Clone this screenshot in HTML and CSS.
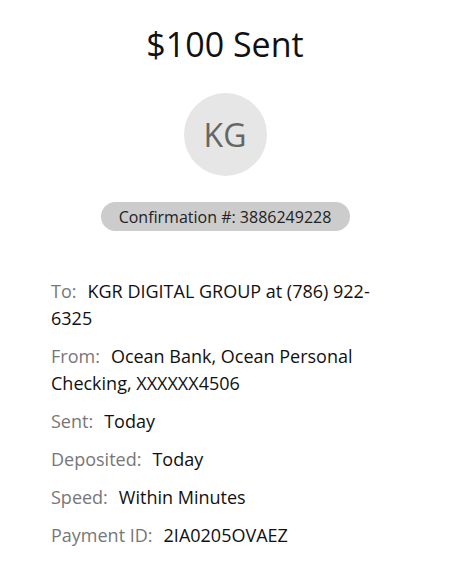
FILE: index.html
```html
<!DOCTYPE html>
<html>
<head>
<meta charset="utf-8">
<link rel="stylesheet" href="styles.css">
</head>
<body>
<main class="receipt">
  <h1 class="title">$100 Sent</h1>
  <div class="avatar">KG</div>
  <div class="confirm">Confirmation #: 3886249228</div>
  <div class="details">
    <p class="row"><span class="label">To:</span>KGR DIGITAL GROUP at (786) 922-6325</p>
    <p class="row"><span class="label">From:</span>Ocean Bank, Ocean Personal Checking, XXXXXX4506</p>
    <p class="row"><span class="label">Sent:</span>Today</p>
    <p class="row"><span class="label">Deposited:</span>Today</p>
    <p class="row"><span class="label">Speed:</span>Within Minutes</p>
    <p class="row"><span class="label">Payment ID:</span>2IA0205OVAEZ</p>
  </div>
</main>
</body>
</html>
```
FILE: styles.css
```css
* { box-sizing: border-box; }
html, body {
  margin: 0;
  padding: 0;
  background: #fff;
}
body {
  font-family: "Open Sans", "Liberation Sans", sans-serif;
  color: #111;
}
.receipt {
  display: flex;
  flex-direction: column;
  align-items: center;
  padding-top: 24px;
}
.title {
  margin: 0;
  font-size: 34px;
  font-weight: 400;
  line-height: 40px;
  color: #111;
}
.avatar {
  margin-top: 29px;
  width: 83px;
  height: 83px;
  border-radius: 50%;
  background: #e6e6e6;
  color: #666;
  font-size: 32px;
  display: flex;
  align-items: center;
  justify-content: center;
}
.confirm {
  margin-top: 26px;
  width: 249px;
  height: 29px;
  border-radius: 15px;
  background: #cccccc;
  color: #222;
  font-size: 16px;
  display: flex;
  align-items: center;
  justify-content: center;
}
.details {
  align-self: stretch;
  margin-top: 47px;
  padding: 0 51px;
  font-size: 18px;
  line-height: 27px;
}
.row {
  margin: 0 0 11px;
  color: #111;
}
.label {
  color: #777;
  margin-right: 11px;
}
```
